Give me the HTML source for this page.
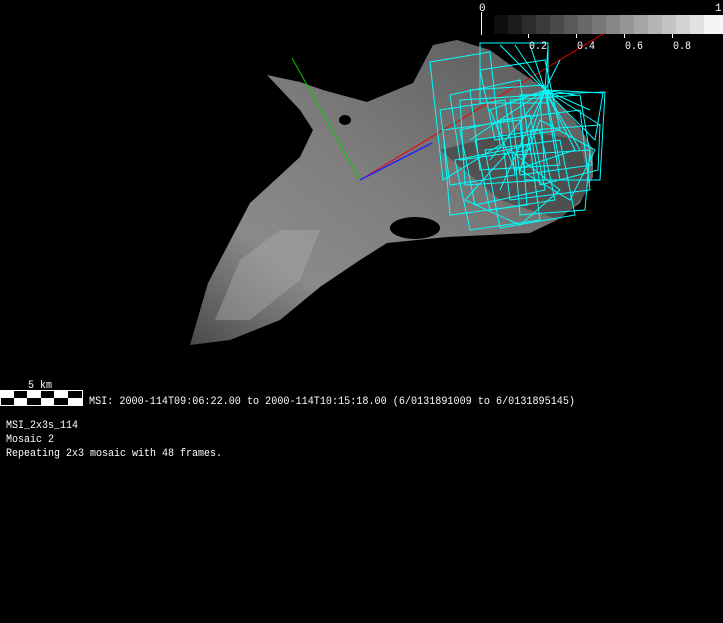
<!DOCTYPE html>
<html><head><style>
html,body{margin:0;padding:0;background:#000;width:723px;height:623px;overflow:hidden}
svg{display:block}
text{font-family:"Liberation Mono","DejaVu Sans Mono",monospace;font-size:11px;fill:#fff}
</style></head><body>
<svg width="723" height="623" viewBox="0 0 723 623">
<defs>
<linearGradient id="g" x1="0" y1="1" x2="1" y2="0">
<stop offset="0" stop-color="#4a4a4a"/><stop offset="0.25" stop-color="#8a8a8a"/><stop offset="0.5" stop-color="#7e7e7e"/><stop offset="0.8" stop-color="#666"/><stop offset="1" stop-color="#555"/>
</linearGradient>
</defs>
<polygon fill="url(#g)" points="190,345 208,283 250,203 300,157 313,130 300,110 267,75 300,82 323,90 367,102 413,83 433,45 457,40 490,50 513,67 547,90 580,127 593,150 593,177 580,203 557,220 530,233 447,237 387,243 360,260 320,287 280,320 230,340"/>
<polygon fill="#aaa" opacity="0.45" points="215,320 240,260 280,230 320,230 300,280 250,320"/>
<polygon fill="#3a3a3a" opacity="0.6" points="440,150 500,200 560,220 590,190 580,140 520,130"/>
<ellipse cx="415" cy="228" rx="25" ry="11" fill="#000"/>
<ellipse cx="345" cy="120" rx="6" ry="5" fill="#000"/>
<line x1="292" y1="58" x2="360" y2="180" stroke="#0c0" stroke-width="1"/>
<line x1="360" y1="180" x2="608" y2="31" stroke="#e00" stroke-width="1"/>
<line x1="360" y1="180" x2="432" y2="143" stroke="#22f" stroke-width="1.5"/>
<g fill="none" stroke="#0ff" stroke-width="1">
<rect x="480" y="43" width="68" height="60"/>
<polygon points="430,62 490,52 500,145 443,180"/>
<polygon points="443,130 520,120 527,205 450,215"/>
<polygon points="460,100 540,95 545,180 465,185"/>
<polygon points="485,150 560,140 575,215 500,228"/>
<polygon points="520,95 605,92 600,180 525,180"/>
<polygon points="545,90 603,93 595,140 545,90"/>
<polygon points="470,90 545,85 560,165 480,170"/>
<polygon points="500,120 580,110 590,190 510,200"/>
<polygon points="455,160 530,145 540,220 470,230"/>
<polygon points="515,155 590,150 585,210 520,215"/>
<polygon points="480,70 545,60 560,130 495,140"/>
<polygon points="440,110 505,100 515,175 450,185"/>
<polygon points="530,130 600,125 598,170 540,185"/>
<polygon points="465,200 510,150 560,190 520,225"/>
<polygon points="490,110 545,90 575,150 515,170"/>
<polygon points="460,130 530,115 545,190 475,205"/>
<polygon points="510,100 580,95 592,165 520,175"/>
<polygon points="475,140 540,130 555,200 490,210"/>
<polygon points="540,120 595,150 570,200 520,170"/>
<polygon points="450,95 520,80 530,150 460,160"/>
<path d="M545,90 L500,45 M545,90 L515,45 M545,90 L530,45 M545,90 L548,45 M545,90 L560,60 M545,90 L575,95 M545,90 L590,110 M545,90 L600,125 M545,90 L560,180 M545,90 L520,170 M545,90 L470,140 M545,90 L490,160 M545,90 L580,150 M545,90 L500,190"/>
</g>
<g>
<rect x="494" y="15" width="15" height="19" fill="#0e0e0e"/><rect x="508" y="15" width="15" height="19" fill="#1c1c1c"/><rect x="522" y="15" width="15" height="19" fill="#2c2c2c"/><rect x="536" y="15" width="15" height="19" fill="#3b3b3b"/><rect x="550" y="15" width="15" height="19" fill="#4a4a4a"/><rect x="564" y="15" width="15" height="19" fill="#595959"/><rect x="578" y="15" width="15" height="19" fill="#696969"/><rect x="592" y="15" width="15" height="19" fill="#777"/><rect x="606" y="15" width="15" height="19" fill="#878787"/><rect x="620" y="15" width="15" height="19" fill="#969696"/><rect x="634" y="15" width="15" height="19" fill="#a5a5a5"/><rect x="648" y="15" width="15" height="19" fill="#b4b4b4"/><rect x="662" y="15" width="15" height="19" fill="#c3c3c3"/><rect x="676" y="15" width="15" height="19" fill="#d3d3d3"/><rect x="690" y="15" width="15" height="19" fill="#e2e2e2"/><rect x="704" y="15" width="19" height="19" fill="#f5f5f5"/>
</g>
<g stroke="#fff" stroke-width="1">
<line x1="481.5" y1="12" x2="481.5" y2="35"/>
<line x1="528.5" y1="34" x2="528.5" y2="38"/><line x1="576.5" y1="34" x2="576.5" y2="38"/><line x1="624.5" y1="34" x2="624.5" y2="38"/><line x1="672.5" y1="34" x2="672.5" y2="38"/>
</g>
<text x="479" y="11">0</text><text x="715" y="11">1</text>
<text x="529" y="49" textLength="18" lengthAdjust="spacingAndGlyphs">0.2</text><text x="577" y="49" textLength="18" lengthAdjust="spacingAndGlyphs">0.4</text><text x="625" y="49" textLength="18" lengthAdjust="spacingAndGlyphs">0.6</text><text x="673" y="49" textLength="18" lengthAdjust="spacingAndGlyphs">0.8</text>
<text x="28" y="388" textLength="24" lengthAdjust="spacingAndGlyphs">5 km</text>
<rect x="0.5" y="390.5" width="82" height="15" fill="#fff" stroke="#fff"/>
<g fill="#000">
<rect x="14" y="391" width="13" height="7"/><rect x="41" y="391" width="13" height="7"/><rect x="68" y="391" width="14" height="7"/>
<rect x="1" y="398" width="13" height="7"/><rect x="27" y="398" width="14" height="7"/><rect x="54" y="398" width="14" height="7"/>
</g>
<text x="89" y="404" textLength="486" lengthAdjust="spacingAndGlyphs">MSI:  2000-114T09:06:22.00 to 2000-114T10:15:18.00 (6/0131891009 to 6/0131895145)</text>
<text x="6" y="428" textLength="72" lengthAdjust="spacingAndGlyphs">MSI_2x3s_114</text>
<text x="6" y="442" textLength="48" lengthAdjust="spacingAndGlyphs">Mosaic 2</text>
<text x="6" y="456" textLength="216" lengthAdjust="spacingAndGlyphs">Repeating 2x3 mosaic with 48 frames.</text>
</svg>
</body></html>
